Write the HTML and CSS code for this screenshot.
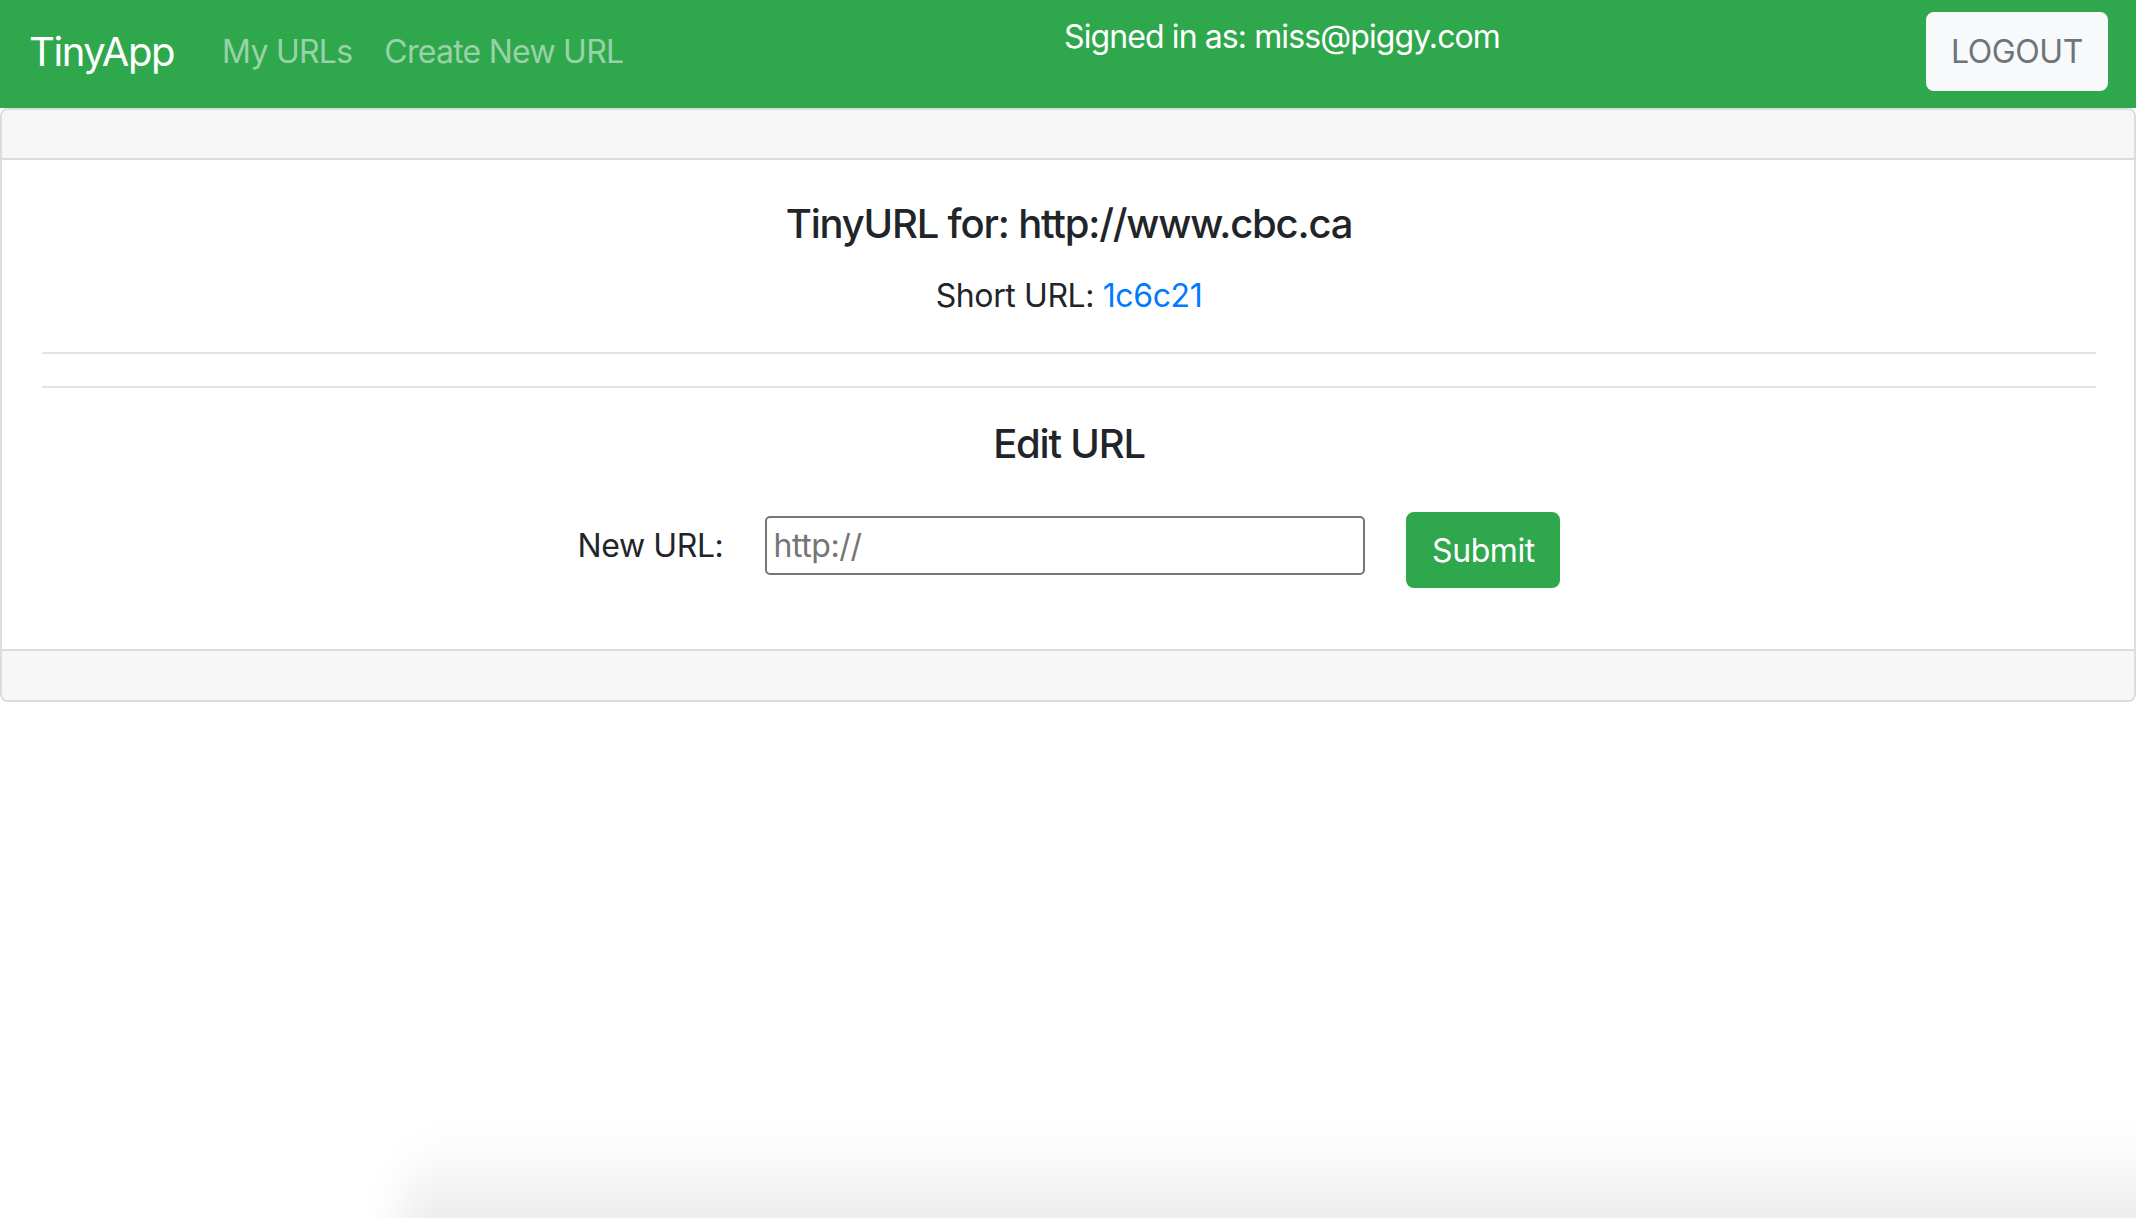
FILE: index.html
```html
<!DOCTYPE html>
<html lang="en">
<head>
<meta charset="utf-8">
<title>TinyApp</title>
<link rel="stylesheet" href="styles.css">
</head>
<body>
<nav class="navbar">
  <a class="brand" href="#">TinyApp</a>
  <ul class="nav">
    <li><a class="nav-link" href="#">My URLs</a></li>
    <li><a class="nav-link" href="#">Create New URL</a></li>
  </ul>
  <div class="signed">Signed in as: miss@piggy.com</div>
  <button class="logout" type="button">LOGOUT</button>
</nav>
<main class="card">
  <div class="card-header"></div>
  <div class="card-body">
    <h5 class="card-title">TinyURL for: http://www.cbc.ca</h5>
    <p class="short">Short URL: <a href="#">1c6c21</a></p>
    <hr class="rule">
    <hr class="rule">
    <h5 class="card-title">Edit URL</h5>
    <form class="edit-form">
      <label class="edit-label" for="longURL">New URL:</label>
      <input class="edit-input" id="longURL" type="text" placeholder="http://">
      <button class="submit" type="submit">Submit</button>
    </form>
  </div>
  <div class="card-footer"></div>
</main>
<div class="dock-shadow"></div>
</body>
</html>
```

FILE: styles.css
```css
* { box-sizing: border-box; }
html, body { margin: 0; padding: 0; }
body {
  font-family: Inter, "Liberation Sans", Arial, sans-serif;
  font-size: 32px;
  line-height: 1.5;
  color: #212529;
  background: #fff;
  overflow: hidden;
  height: 1218px;
}
a { text-decoration: none; }

.navbar {
  display: flex;
  align-items: flex-start;
  height: 108px;
  padding: 0 28px 0 29px;
  background: #2fa74d;
}
.brand {
  font-size: 40px;
  line-height: 60px;
  margin-top: 22px;
  color: #fff;
  margin-right: 32px;
  letter-spacing: -1.4px;
}
.nav {
  display: flex;
  list-style: none;
  margin: 0;
  padding: 0;
}
.nav-link {
  display: block;
  padding: 0 16px;
  margin-top: 28px;
  line-height: 48px;
  color: rgba(255, 255, 255, 0.5);
  letter-spacing: -0.75px;
}
.signed {
  margin-left: auto;
  margin-right: 426px;
  margin-top: 13px;
  line-height: 48px;
  color: #fff;
  letter-spacing: -0.9px;
}
.logout {
  margin-top: 12px;
  height: 79px;
  width: 182px;
  padding: 0;
  border: 2px solid #f8f9fa;
  border-radius: 8px;
  background: #f8f9fa;
  color: #6c757d;
  font-family: inherit;
  font-size: 32px;
  letter-spacing: -0.4px;
}

.card {
  display: flex;
  flex-direction: column;
  border: 2px solid #dcdcdc;
  border-radius: 8px;
  overflow: hidden;
}
.card-header {
  height: 50px;
  background: #f7f7f7;
  border-bottom: 2px solid #dcdcdc;
}
.card-footer {
  height: 51px;
  background: #f7f7f7;
  border-top: 2px solid #dcdcdc;
}
.card-body {
  padding: 40px 38px 40px 40px;
  text-align: center;
}
.card-title {
  margin: 0 0 24px;
  font-size: 40px;
  font-weight: 500;
  line-height: 48px;
  letter-spacing: -1.2px;
}
.short {
  margin: 0 0 32px;
  line-height: 48px;
  letter-spacing: -0.4px;
}
.short a { color: #007bff; }
.rule {
  margin: 32px 0;
  border: 0;
  border-top: 2px solid #e3e3e3;
}
.rule + .rule { margin-top: 0; }

.edit-form {
  display: flex;
  justify-content: center;
  align-items: flex-start;
  padding: 20px 0 21px;
  margin: 0;
}
.edit-label {
  margin-top: 10px;
  line-height: 48px;
  margin-right: 42px;
  letter-spacing: -0.4px;
}
.edit-input {
  margin-top: 4px;
  width: 600px;
  height: 59px;
  padding: 0 6px;
  border: 2px solid #767676;
  border-radius: 5px;
  font-family: inherit;
  font-size: 32px;
  color: #212529;
  margin-right: 41px;
  letter-spacing: -0.4px;
}
.edit-input::placeholder { color: #757575; }
.submit {
  width: 154px;
  height: 76px;
  padding: 0;
  border: 2px solid #2fa74d;
  border-radius: 8px;
  background: #2fa74d;
  color: #fff;
  font-family: inherit;
  font-size: 32px;
  letter-spacing: -0.4px;
}

.dock-shadow {
  position: fixed;
  left: 400px;
  right: -60px;
  top: 1130px;
  height: 200px;
  border-radius: 80px;
  background: linear-gradient(to bottom, rgba(0,0,0,0), rgba(0,0,0,0.08) 50%);
  filter: blur(18px);
  pointer-events: none;
}
```
